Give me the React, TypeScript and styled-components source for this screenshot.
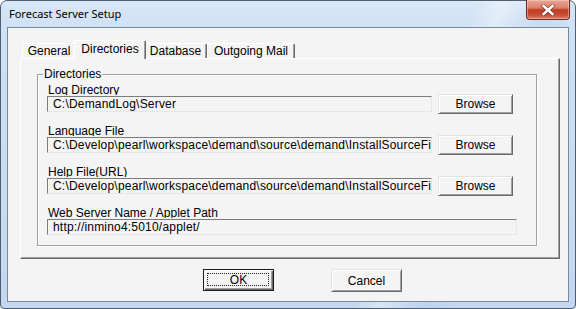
import React from 'react';
import styled, { createGlobalStyle, css } from 'styled-components';

const GlobalStyle = createGlobalStyle`
  html, body {
    margin: 0;
    padding: 0;
    background: #ffffff;
    overflow: hidden;
  }
`;

const ui = `"Liberation Sans", Arial, sans-serif`;

const Window = styled.div`
  width: 576px;
  height: 309px;
  box-sizing: border-box;
  border: 1px solid #4f5f72;
  border-radius: 7px 7px 4px 4px;
  padding: 0 6px 6px;
  display: flex;
  flex-direction: column;
  background:
    linear-gradient(112deg, rgba(255,255,255,0) 68%, rgba(255,255,255,0.35) 72%, rgba(255,255,255,0) 76%, rgba(170,200,235,0.25) 79%, rgba(255,255,255,0) 83%),
    linear-gradient(180deg, #dae8f7 0%, #cfe1f4 8%, #c3d8f0 100%);
  font-family: ${ui};
`;

const TitleBar = styled.div`
  height: 26px;
  flex: none;
  display: flex;
  align-items: flex-start;
  justify-content: space-between;
`;

const Title = styled.div`
  padding: 5px 0 0 2px;
  font-family: "Noto Sans", "Open Sans", sans-serif;
  font-size: 11px;
  line-height: 15px;
  color: #000;
`;

const CloseButton = styled.div`
  width: 44px;
  height: 20px;
  margin: -1px -1px 0 0;
  box-sizing: border-box;
  border: 1px solid #6b2a20;
  border-top: none;
  border-radius: 0 0 4px 4px;
  background: linear-gradient(180deg, #e9a898 0%, #d9806a 42%, #c23d24 52%, #c64a32 75%, #de7a62 100%);
  box-shadow: inset 0 0 0 1px rgba(255, 220, 210, 0.45);
  display: flex;
  align-items: center;
  justify-content: center;
`;

const Client = styled.div`
  flex: 1;
  border: 1px solid #7b8898;
  background: #f4f4f4;
  padding: 12px 8px 0 12px;
  display: flex;
  flex-direction: column;
  color: #000;
  font-size: 12px;
`;

const TabRow = styled.div`
  height: 18px;
  display: flex;
  align-items: flex-end;
  padding-left: 2px;
`;

const Tab = styled.div<{ $w: number; $active?: boolean }>`
  box-sizing: border-box;
  width: ${p => p.$w}px;
  height: 15px;
  border-top: 1px solid #ffffff;
  border-left: 1px solid #ffffff;
  border-right: 1px solid #696969;
  border-radius: 2px 2px 0 0;
  box-shadow: inset -1px 0 0 #a0a0a0;
  background: #f4f4f4;
  text-align: center;
  line-height: 14px;
  white-space: nowrap;
  ${p => p.$active && css`
    width: ${p.$w + 4}px;
    height: 19px;
    margin: 0 -2px -1px;
    padding-top: 1px;
    position: relative;
    z-index: 1;
  `}
`;

const Panel = styled.div`
  height: 201px;
  box-sizing: border-box;
  border-top: 1px solid #ffffff;
  border-left: 1px solid #ffffff;
  border-right: 1px solid #696969;
  border-bottom: 1px solid #696969;
  box-shadow: inset -1px -1px 0 #a0a0a0;
  padding: 8px 0 0 16px;
`;

const Group = styled.fieldset`
  width: 500px;
  box-sizing: border-box;
  margin: 0;
  padding: 2px 19px 8px 9px;
  border: 1px solid #a0a0a0;
  box-shadow: inset 1px 1px 0 #ffffff, 1px 1px 0 #ffffff;
`;

const Legend = styled.legend`
  margin-left: -4px;
  padding: 0 1px;
  line-height: 14px;
  background: #f4f4f4;
`;

const FieldBlock = styled.div`
  display: flex;
  flex-direction: column;
  & + & {
    margin-top: 10px;
  }
`;

const Label = styled.div`
  height: 12px;
  line-height: 14px;
  padding-left: 1px;
  overflow: hidden;
  white-space: nowrap;
`;

const ControlRow = styled.div`
  height: 20px;
  margin-top: -1px;
  display: flex;
  align-items: center;
  gap: 6px;
`;

const Field = styled.div<{ $w: number }>`
  flex: none;
  width: ${p => p.$w}px;
  height: 16px;
  box-sizing: border-box;
  border-top: 1px solid #7c7c7c;
  border-left: 1px solid #7c7c7c;
  border-right: 1px solid #e6e6e6;
  border-bottom: 1px solid #e6e6e6;
  background: #f4f4f4;
  padding-left: 5px;
  line-height: 14px;
  letter-spacing: 0.2px;
  white-space: nowrap;
  overflow: hidden;
`;

const bevel = css`
  flex: none;
  box-sizing: border-box;
  background: #f4f4f4;
  font-family: ${ui};
  font-size: 12px;
  color: #000;
  padding: 0;
  display: flex;
  align-items: center;
  justify-content: center;
`;

const Button = styled.div<{ $w: number; $h: number }>`
  ${bevel};
  width: ${p => p.$w}px;
  height: ${p => p.$h}px;
  border-top: 1px solid #e3e3e3;
  border-left: 1px solid #e3e3e3;
  border-right: 1px solid #696969;
  border-bottom: 1px solid #696969;
  box-shadow: inset 1px 1px 0 #ffffff, inset -1px -1px 0 #a0a0a0;
`;

const DefaultButton = styled.div<{ $w: number; $h: number }>`
  ${bevel};
  position: relative;
  width: ${p => p.$w}px;
  height: ${p => p.$h}px;
  border: 1px solid #1a1a1a;
  box-shadow: inset 1px 1px 0 #ffffff, inset -1px -1px 0 #696969, inset -2px -2px 0 #a0a0a0;

  &::after {
    content: '';
    position: absolute;
    inset: 3px 4px 4px 3px;
    border: 1px dotted #222;
  }
`;

const Footer = styled.div`
  display: flex;
  gap: 57px;
  padding: 10px 0 0 183px;
`;

const CloseGlyph = () => (
  <svg width="16" height="12" viewBox="0 0 16 12">
    <path d="M3.5 2 L12.5 10 M12.5 2 L3.5 10" stroke="#5a1d14" strokeWidth="4.2" strokeLinecap="square" opacity="0.55" />
    <path d="M3.5 2 L12.5 10 M12.5 2 L3.5 10" stroke="#ffffff" strokeWidth="2.6" strokeLinecap="square" />
  </svg>
);

const tabs = [
  { title: 'General', width: 54 },
  { title: 'Directories', width: 68, active: true },
  { title: 'Database', width: 63 },
  { title: 'Outgoing Mail', width: 88 },
];

const dirs = [
  { label: 'Log Directory', value: 'C:\\DemandLog\\Server', browse: true },
  { label: 'Language File', value: 'C:\\Develop\\pearl\\workspace\\demand\\source\\demand\\InstallSourceFiles\\language', browse: true },
  { label: 'Help File(URL)', value: 'C:\\Develop\\pearl\\workspace\\demand\\source\\demand\\InstallSourceFiles\\help', browse: true },
  { label: 'Web Server Name / Applet Path', value: 'http://inmino4:5010/applet/', browse: false },
];

export default function App() {
  return (
    <>
      <GlobalStyle />
      <Window>
        <TitleBar>
          <Title>Forecast Server Setup</Title>
          <CloseButton><CloseGlyph /></CloseButton>
        </TitleBar>
        <Client>
          <TabRow>
            {tabs.map(t => (
              <Tab key={t.title} $w={t.width} $active={t.active}>{t.title}</Tab>
            ))}
          </TabRow>
          <Panel>
            <Group>
              <Legend>Directories</Legend>
              {dirs.map(d => (
                <FieldBlock key={d.label}>
                  <Label>{d.label}</Label>
                  <ControlRow>
                    <Field $w={d.browse ? 385 : 470}>{d.value}</Field>
                    {d.browse && <Button $w={75} $h={20}>Browse</Button>}
                  </ControlRow>
                </FieldBlock>
              ))}
            </Group>
          </Panel>
          <Footer>
            <DefaultButton $w={71} $h={22}>OK</DefaultButton>
            <Button $w={71} $h={23}>Cancel</Button>
          </Footer>
        </Client>
      </Window>
    </>
  );
}
